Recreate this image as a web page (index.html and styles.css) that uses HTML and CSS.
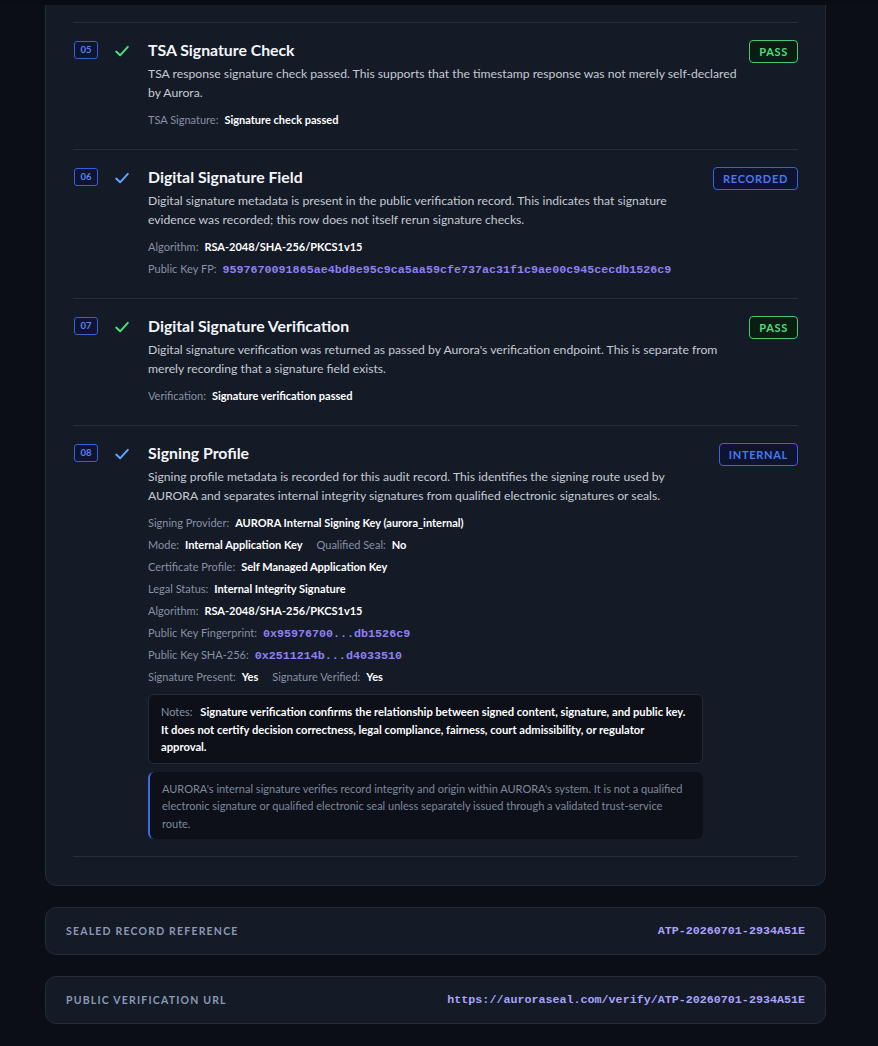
FILE: index.html
```html
<!DOCTYPE html>
<html lang="en">
<head>
<meta charset="utf-8">
<title>Verification Checks</title>
<link rel="stylesheet" href="styles.css">
</head>
<body>
<div class="topbar"></div>
<main class="page">
  <section class="checks-card">
    <div class="check-list">

      <div class="check-row">
        <span class="num">05</span>
        <span class="tick tick-green"><svg viewBox="0 0 16 16" width="16" height="16"><path d="M2.2 8.6l3.9 3.7L13.8 3.8"/></svg></span>
        <div class="content">
          <h3 class="title">TSA Signature Check</h3>
          <p class="desc">TSA response signature check passed. This supports that the timestamp response was not merely self-declared by Aurora.</p>
          <div class="meta">
            <div class="meta-line"><span class="k">TSA Signature:</span><span class="v">Signature check passed</span></div>
          </div>
        </div>
        <span class="badge badge-pass">PASS</span>
      </div>

      <div class="check-row">
        <span class="num">06</span>
        <span class="tick tick-blue"><svg viewBox="0 0 16 16" width="16" height="16"><path d="M2.2 8.6l3.9 3.7L13.8 3.8"/></svg></span>
        <div class="content">
          <h3 class="title">Digital Signature Field</h3>
          <p class="desc">Digital signature metadata is present in the public verification record. This indicates that signature evidence was recorded; this row does not itself rerun signature checks.</p>
          <div class="meta">
            <div class="meta-line"><span class="k">Algorithm:</span><span class="v">RSA-2048/SHA-256/PKCS1v15</span></div>
            <div class="meta-line"><span class="k">Public Key FP:</span><span class="v mono">9597670091865ae4bd8e95c9ca5aa59cfe737ac31f1c9ae00c945cecdb1526c9</span></div>
          </div>
        </div>
        <span class="badge badge-blue">RECORDED</span>
      </div>

      <div class="check-row">
        <span class="num">07</span>
        <span class="tick tick-green"><svg viewBox="0 0 16 16" width="16" height="16"><path d="M2.2 8.6l3.9 3.7L13.8 3.8"/></svg></span>
        <div class="content">
          <h3 class="title">Digital Signature Verification</h3>
          <p class="desc">Digital signature verification was returned as passed by Aurora's verification endpoint. This is separate from merely recording that a signature field exists.</p>
          <div class="meta">
            <div class="meta-line"><span class="k">Verification:</span><span class="v">Signature verification passed</span></div>
          </div>
        </div>
        <span class="badge badge-pass">PASS</span>
      </div>

      <div class="check-row">
        <span class="num">08</span>
        <span class="tick tick-blue"><svg viewBox="0 0 16 16" width="16" height="16"><path d="M2.2 8.6l3.9 3.7L13.8 3.8"/></svg></span>
        <div class="content">
          <h3 class="title">Signing Profile</h3>
          <p class="desc">Signing profile metadata is recorded for this audit record. This identifies the signing route used by AURORA and separates internal integrity signatures from qualified electronic signatures or seals.</p>
          <div class="meta">
            <div class="meta-line"><span class="k">Signing Provider:</span><span class="v">AURORA Internal Signing Key (aurora_internal)</span></div>
            <div class="meta-line"><span class="k">Mode:</span><span class="v">Internal Application Key</span><span class="k pair">Qualified Seal:</span><span class="v">No</span></div>
            <div class="meta-line"><span class="k">Certificate Profile:</span><span class="v">Self Managed Application Key</span></div>
            <div class="meta-line"><span class="k">Legal Status:</span><span class="v">Internal Integrity Signature</span></div>
            <div class="meta-line"><span class="k">Algorithm:</span><span class="v">RSA-2048/SHA-256/PKCS1v15</span></div>
            <div class="meta-line"><span class="k">Public Key Fingerprint:</span><span class="v mono">0x95976700...db1526c9</span></div>
            <div class="meta-line"><span class="k">Public Key SHA-256:</span><span class="v mono">0x2511214b...d4033510</span></div>
            <div class="meta-line"><span class="k">Signature Present:</span><span class="v">Yes</span><span class="k pair">Signature Verified:</span><span class="v">Yes</span></div>
          </div>
          <div class="notes"><span class="notes-label">Notes:</span> Signature verification confirms the relationship between signed content, signature, and public key. It does not certify decision correctness, legal compliance, fairness, court admissibility, or regulator approval.</div>
          <div class="callout">AURORA's internal signature verifies record integrity and origin within AURORA's system. It is not a qualified electronic signature or qualified electronic seal unless separately issued through a validated trust-service route.</div>
        </div>
        <span class="badge badge-blue">INTERNAL</span>
      </div>

    </div>
  </section>

  <section class="ref-card">
    <span class="ref-label">Sealed Record Reference</span>
    <span class="ref-value">ATP-20260701-2934A51E</span>
  </section>

  <section class="ref-card">
    <span class="ref-label">Public Verification URL</span>
    <span class="ref-value">https://auroraseal.com/verify/ATP-20260701-2934A51E</span>
  </section>
</main>
</body>
</html>
```

FILE: styles.css
```css
* { box-sizing: border-box; }
html, body { margin: 0; padding: 0; }
body {
  background: #0b0e16;
  font-family: Lato, "Noto Sans", sans-serif;
  color: #e6e9ef;
  -webkit-font-smoothing: antialiased;
}
.topbar {
  height: 5px;
  background: #090b15;
}
.page {
  padding: 0 52px 40px 45px;
  display: flex;
  flex-direction: column;
  gap: 21px;
}
.checks-card {
  background: #141a26;
  border: 1px solid #232a38;
  border-top: none;
  border-radius: 0 0 12px 12px;
  padding: 17px 27px 28px;
}
.check-list { border-bottom: 1px solid #262d3b; }
.check-row {
  display: grid;
  grid-template-columns: 40px 35px 1fr auto;
  align-items: start;
  border-top: 1px solid #262d3b;
  padding: 17px 0 18px;
}
.check-row:last-child { padding-bottom: 17px; }
.num {
  margin: 1px 0 0 1px;
  width: 24px;
  height: 18px;
  border: 1px solid #3560d6;
  border-radius: 3px;
  background: #0f1530;
  color: #5a80ee;
  font-size: 9.5px;
  font-weight: 700;
  line-height: 16px;
  text-align: center;
}
.tick { display: block; margin-top: 3px; margin-left: 1px; }
.tick svg { display: block; fill: none; stroke-width: 2; stroke-linecap: round; stroke-linejoin: round; }
.tick-green svg { stroke: #4ade80; }
.tick-blue svg { stroke: #60a5fa; }
.content { min-width: 0; }
.title {
  margin: 0 0 4px;
  font-size: 15.8px;
  line-height: 20px;
  font-weight: 700;
  color: #f4f6fa;
}
.desc {
  margin: 0;
  font-size: 12.2px;
  line-height: 19px;
  color: #c5cad4;
}
.meta { margin-top: 7px; }
.meta-line {
  height: 22px;
  font-size: 11px;
  line-height: 22px;
  white-space: nowrap;
}
.k { color: #8891a5; margin-right: 6px; }
.k.pair { margin-left: 14px; }
.v { color: #ffffff; font-weight: 700; }
.mono {
  font-family: "Liberation Mono", "DejaVu Sans Mono", monospace;
  font-size: 11.7px;
  line-height: 1;
  color: #8f80f5;
}
.notes {
  margin: 6px 6px 0 0;
  background: #0d1019;
  border: 1px solid #242a37;
  border-radius: 6px;
  padding: 8px 12px 7px;
  font-size: 11.2px;
  line-height: 17.5px;
  font-weight: 700;
  color: #ffffff;
}
.notes-label { color: #8891a5; font-weight: 400; font-size: 11px; margin-right: 5px; }
.callout {
  margin: 8px 6px 0 0;
  background: #0d1019;
  border-left: 2px solid #3d6be0;
  border-radius: 6px;
  padding: 8px 12px 7px;
  font-size: 11px;
  line-height: 17.5px;
  color: #7e889c;
}
.badge {
  margin-left: 10px;
  border: 1px solid;
  border-radius: 4px;
  padding: 0 9px;
  height: 23px;
  line-height: 21px;
  font-size: 11px;
  font-weight: 700;
  letter-spacing: 0.7px;
}
.badge-pass { color: #4ade80; border-color: #47c777; background: #0a1d12; }
.badge-blue { color: #4a78ee; border-color: #3765e0; background: #0e1430; }
.ref-card {
  height: 48px;
  background: #141a26;
  border: 1px solid #232a38;
  border-radius: 11px;
  padding: 0 20px;
  display: flex;
  align-items: center;
  justify-content: space-between;
}
.ref-label {
  text-transform: uppercase;
  font-size: 10.5px;
  font-weight: 700;
  letter-spacing: 1.2px;
  color: #8a99b6;
}
.ref-value {
  font-family: "Liberation Mono", "DejaVu Sans Mono", monospace;
  font-size: 11.7px;
  font-weight: 700;
  color: #a9a3fb;
}
```
